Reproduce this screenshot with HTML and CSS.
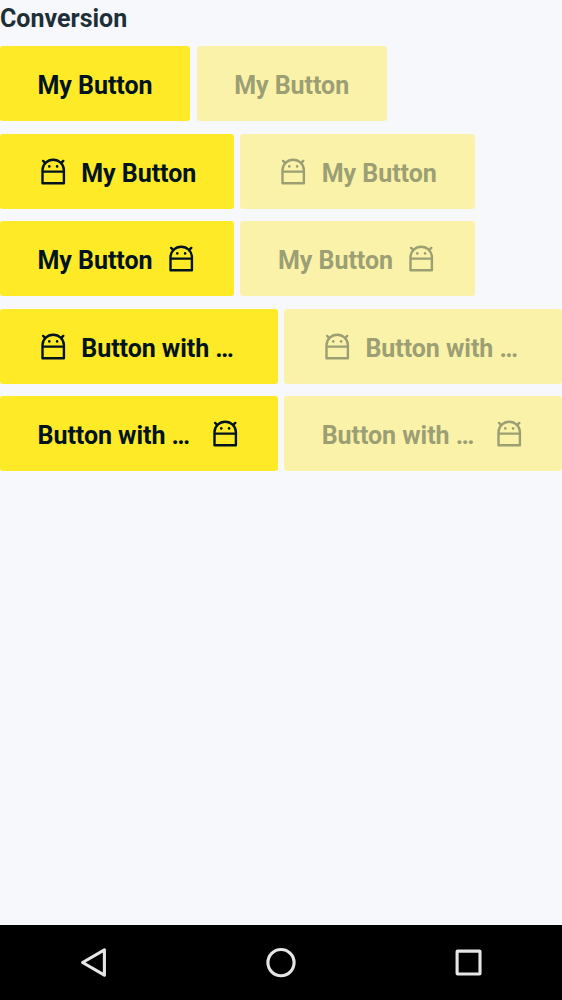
FILE: index.html
```html
<!DOCTYPE html>
<html lang="en">
<head>
<meta charset="utf-8">
<title>Conversion</title>
<link rel="stylesheet" href="styles.css">
</head>
<body>
<svg class="defs" aria-hidden="true">
  <symbol id="android" viewBox="0 0 31.25 31.25">
    <path d="M4.5 27.3V14.1a10.7 10.4 0 0 1 21.4 0V27.3ZM4.5 15.6H25.9" fill="none" stroke="currentColor" stroke-width="2.4" stroke-linejoin="round"/>
    <path d="M5.1 4.9L7.4 7.2M25.3 4.9L23 7.2" fill="none" stroke="currentColor" stroke-width="2.4" stroke-linecap="round"/>
    <circle cx="11.3" cy="10.4" r="1.3" fill="currentColor"/>
    <circle cx="19.1" cy="10.4" r="1.3" fill="currentColor"/>
  </symbol>
</svg>
<main class="screen">
  <h1 class="title">Conversion</h1>
  <div class="rows">
    <div class="row">
      <button class="btn text-only"><span class="label">My Button</span></button>
      <button class="btn text-only" disabled><span class="label">My Button</span></button>
    </div>
    <div class="row">
      <button class="btn"><svg class="icon"><use href="#android"/></svg><span class="label">My Button</span></button>
      <button class="btn" disabled><svg class="icon"><use href="#android"/></svg><span class="label">My Button</span></button>
    </div>
    <div class="row">
      <button class="btn"><span class="label">My Button</span><svg class="icon icon-end"><use href="#android"/></svg></button>
      <button class="btn" disabled><span class="label">My Button</span><svg class="icon"><use href="#android"/></svg></button>
    </div>
    <div class="row">
      <button class="btn wide"><svg class="icon"><use href="#android"/></svg><span class="label">Button with …</span></button>
      <button class="btn wide" disabled><svg class="icon"><use href="#android"/></svg><span class="label">Button with …</span></button>
    </div>
    <div class="row">
      <button class="btn wide"><span class="label">Button with …</span><svg class="icon icon-end"><use href="#android"/></svg></button>
      <button class="btn wide" disabled><span class="label">Button with …</span><svg class="icon icon-end"><use href="#android"/></svg></button>
    </div>
  </div>
</main>
<nav class="navbar">
  <svg class="nav-icon" viewBox="0 0 36 36"><path d="M28.4 4.8V30.2L6.6 17.5Z"/></svg>
  <svg class="nav-icon" viewBox="0 0 36 36"><circle cx="18" cy="17.6" r="13.1"/></svg>
  <svg class="nav-icon" viewBox="0 0 36 36"><rect x="6.1" y="6.1" width="22.9" height="22.9" rx="0.5"/></svg>
</nav>
</body>
</html>
```
FILE: styles.css
```css
body {
  margin: 0;
  height: 1000px;
  display: flex;
  flex-direction: column;
  overflow: hidden;
  background: #f6f8fb;
  font-family: Roboto, sans-serif;
}

.defs {
  display: none;
}

.screen {
  flex: 1;
}

.title {
  margin: 0;
  height: 46.25px;
  box-sizing: border-box;
  padding-top: 4px;
  font-size: 25px;
  line-height: 30px;
  font-weight: 700;
  color: #1f2f38;
}

.rows {
  display: flex;
  flex-direction: column;
  gap: 12.5px;
}

.row {
  display: flex;
  gap: 6.25px;
}

.btn {
  display: flex;
  align-items: center;
  gap: 12.5px;
  width: 234.2px;
  height: 75px;
  box-sizing: border-box;
  padding: 0 37.5px;
  border: 0;
  border-radius: 3px;
  background: #ffea27;
  color: #00131e;
  font: 700 25px/30px Roboto, sans-serif;
  letter-spacing: -0.04px;
}

.btn:disabled {
  background: #fbf2a9;
  color: #9c9f74;
}

.text-only {
  width: 190.4px;
}

.wide {
  width: 278px;
}

.label {
  flex: 1;
  min-width: 0;
  padding-top: 4.8px;
  text-align: left;
  white-space: nowrap;
}

.icon {
  flex: none;
  width: 31.25px;
  height: 31.25px;
}

.icon-end {
  margin-right: -0.7px;
}

.navbar {
  display: flex;
  justify-content: center;
  align-items: center;
  gap: 151.5px;
  height: 75px;
  background: #000;
}

.nav-icon {
  width: 36px;
  height: 36px;
  fill: none;
  stroke: #e6e6e6;
  stroke-width: 3.1;
  stroke-linejoin: round;
}
```
